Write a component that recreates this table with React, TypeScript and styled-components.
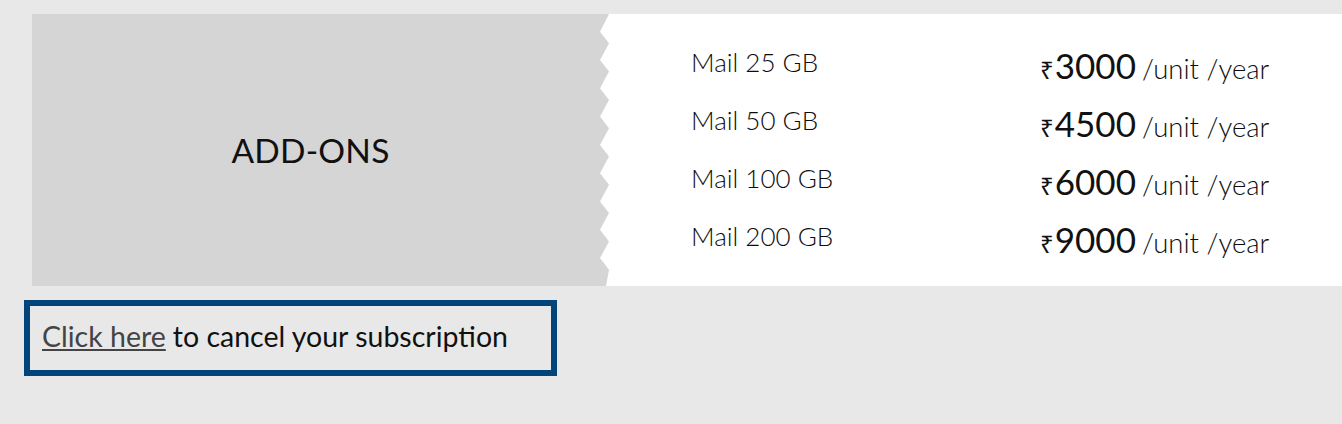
import React from "react";
import styled, { createGlobalStyle } from "styled-components";

const GlobalStyle = createGlobalStyle`
  html, body {
    margin: 0;
    padding: 0;
    background: #e8e8e8;
  }
  body {
    font-family: Lato, "Noto Sans", "DejaVu Sans", sans-serif;
    color: #1a1a1a;
  }
`;

const Page = styled.div`
  padding: 14px 0 0 24px;
  display: flex;
  flex-direction: column;
  align-items: flex-start;
  overflow: hidden;
`;

const Card = styled.div`
  margin-left: 8px;
  width: calc(100vw - 32px);
  display: flex;
  background: #ffffff;
  height: 272px;
`;

const PANEL_W = 577;
const DEPTH = 9;
const PERIOD = 28.3;

function zigzag(height: number): string {
  const pts: string[] = ["0px 0px", `${PANEL_W}px 0px`];
  let y = 17.7;
  while (y < height) {
    pts.push(`${PANEL_W - DEPTH}px ${y.toFixed(1)}px`);
    const peak = y + 11.6;
    if (peak < height) pts.push(`${PANEL_W}px ${peak.toFixed(1)}px`);
    else break;
    y += PERIOD;
  }
  pts.push(`${PANEL_W - 3}px ${height}px`);
  pts.push(`0px ${height}px`);
  return `polygon(${pts.join(", ")})`;
}

const LeftPanel = styled.div<{ $clip: string }>`
  flex: 0 0 ${PANEL_W}px;
  background: #d5d5d5;
  clip-path: ${(p) => p.$clip};
  display: flex;
  align-items: center;
  justify-content: center;
  padding-right: 20px;
  box-sizing: border-box;
`;

const Title = styled.div`
  font-size: 33.5px;
  color: #111;
  letter-spacing: 0.2px;
`;

const Rows = styled.div`
  flex: 1;
  padding: 20px 0 20px 82px;
  display: grid;
  grid-template-columns: 349px auto;
  grid-auto-rows: 58px;
`;

const Name = styled.div`
  font-size: 26px;
  font-weight: 300;
  color: #0d0d0d;
  display: flex;
  align-items: center;
  padding-bottom: 3px;
`;

const Price = styled.div`
  display: flex;
  align-items: baseline;
  align-self: center;
  color: #111;
  padding-top: 4px;
`;

const Rupee = styled.span`
  font-family: "Noto Sans", "DejaVu Sans", sans-serif;
  font-size: 24px;
  margin-right: 1px;
`;

const Amount = styled.span`
  font-size: 35px;
  margin-right: 6px;
`;

const Unit = styled.span`
  font-size: 27.5px;
  font-weight: 300;
  color: #0d0d0d;
`;

const CancelBox = styled.div`
  margin-top: 14px;
  box-sizing: border-box;
  width: 533px;
  height: 76px;
  border: 6px solid #02457a;
  padding: 0 12px 4px;
  display: flex;
  align-items: center;
  font-size: 28.5px;
  color: #111;
  white-space: nowrap;
`;

const CancelLink = styled.a`
  color: #444;
  text-decoration: underline;
  margin-right: 7px;
  cursor: pointer;
`;

const plans = [
  { name: "Mail 25 GB", price: "3000" },
  { name: "Mail 50 GB", price: "4500" },
  { name: "Mail 100 GB", price: "6000" },
  { name: "Mail 200 GB", price: "9000" },
];

export default function App() {
  return (
    <>
      <GlobalStyle />
      <Page>
        <Card>
          <LeftPanel $clip={zigzag(272)}>
            <Title>ADD-ONS</Title>
          </LeftPanel>
          <Rows>
            {plans.map((p) => (
              <React.Fragment key={p.name}>
                <Name>{p.name}</Name>
                <Price>
                  <Rupee>₹</Rupee>
                  <Amount>{p.price}</Amount>
                  <Unit>/unit /year</Unit>
                </Price>
              </React.Fragment>
            ))}
          </Rows>
        </Card>
        <CancelBox>
          <CancelLink>Click here</CancelLink> to cancel your subscription
        </CancelBox>
      </Page>
    </>
  );
}
